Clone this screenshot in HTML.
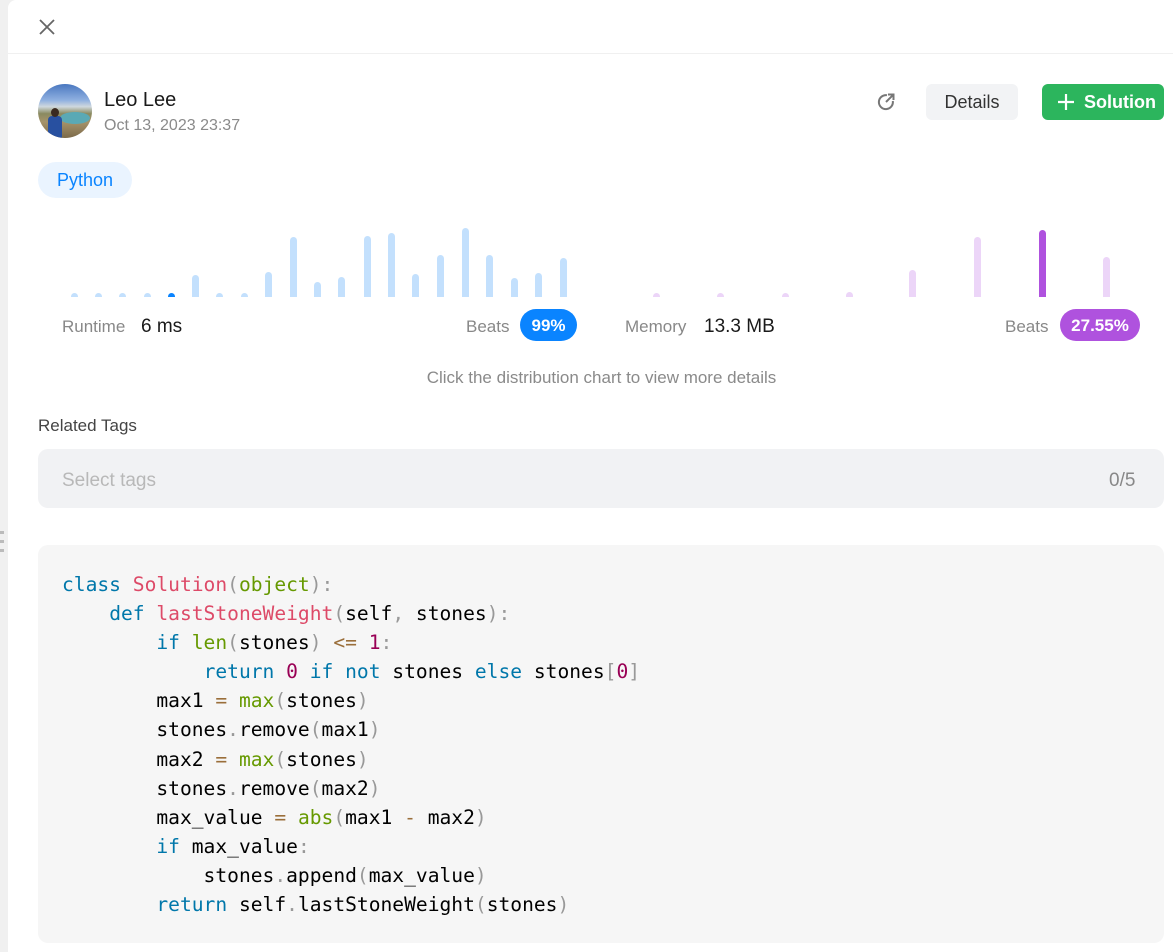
<!DOCTYPE html>
<html><head><meta charset="utf-8"><style>
*{margin:0;padding:0;box-sizing:border-box}
body{width:1173px;height:952px;overflow:hidden;background:#f0f0f0;font-family:"Liberation Sans",sans-serif;position:relative}
.panel{position:absolute;left:8px;top:0;width:1165px;height:952px;background:#fff;border-radius:8px 0 0 0}
.a{position:absolute}
.bar{position:absolute;width:7px;border-radius:4px 4px 0 0;bottom:655px}
.b{background:#c3e0fd}.p{background:#ecd5f8}
pre{position:absolute;left:38px;top:545px;width:1126px;height:398px;background:#f6f6f6;border-radius:10px;padding:25px 0 0 24px;font-family:"DejaVu Sans Mono","Liberation Mono",monospace;font-size:19.6px;line-height:29.1px;color:#000}
.k{color:#07a}.f{color:#dd4a68}.g{color:#690}.n{color:#905}.u{color:#999}.o{color:#9a6e3a}
.dot{position:absolute;left:0;width:4px;height:3px;background:#bbb}
</style></head><body>
<div class="dot" style="top:531px"></div><div class="dot" style="top:540px"></div><div class="dot" style="top:549px"></div>
<div class="panel"></div>
<svg class="a" style="left:38px;top:18px" width="18" height="18" viewBox="0 0 18 18"><path d="M2 2L16 16M16 2L2 16" stroke="#666" stroke-width="1.8"/></svg>
<div class="a" style="left:8px;top:53px;width:1165px;height:1px;background:#f0f0f0"></div>
<div class="a" style="left:38px;top:84px;width:54px;height:54px;border-radius:50%;overflow:hidden;background:linear-gradient(180deg,#4a78c0 0%,#8fb0e0 30%,#cfd8de 42%,#8a8a60 55%,#a6936a 70%,#7c6a4a 100%)">
<div class="a" style="left:22px;top:28px;width:30px;height:12px;border-radius:50%;background:#5aa9b5"></div>
<div class="a" style="left:10px;top:32px;width:14px;height:24px;border-radius:4px;background:#2850a0"></div>
<div class="a" style="left:13px;top:24px;width:8px;height:9px;border-radius:50%;background:#3a2a20"></div></div>
<div class="a" style="left:104px;top:89px;font-size:20px;color:#1a1a1a">Leo Lee</div>
<div class="a" style="left:104px;top:117px;font-size:16px;color:#8a8a8a">Oct 13, 2023 23:37</div>
<svg class="a" style="left:875px;top:91px" width="22" height="22" viewBox="0 0 22 22"><path d="M12 4.2A7 7 0 1 0 17.8 10" fill="none" stroke="#777" stroke-width="2"/><path d="M11 11L18 4M13 3.5H18.5V9" fill="none" stroke="#777" stroke-width="2"/></svg>
<div class="a" style="left:926px;top:84px;width:92px;height:36px;border-radius:6px;background:#f2f3f5;color:#333;font-size:18px;text-align:center;line-height:37px">Details</div>
<div class="a" style="left:1042px;top:84px;width:122px;height:36px;border-radius:6px;background:#2cb55d;color:#fff;font-size:18px;font-weight:bold;line-height:37px;padding-left:42px">Solution
<svg class="a" style="left:15px;top:9px" width="18" height="18"><path d="M9 1V17M1 9H17" stroke="#fff" stroke-width="2.2"/></svg></div>
<div class="a" style="left:38px;top:162px;width:94px;height:36px;border-radius:18px;background:#eaf4ff;color:#0a84ff;font-size:18px;text-align:center;line-height:37px">Python</div>
<div class="bar b" style="left:71px;height:4px"></div><div class="bar b" style="left:95px;height:4px"></div><div class="bar b" style="left:119px;height:4px"></div><div class="bar b" style="left:144px;height:4px"></div><div class="bar" style="left:168px;height:4px;background:#0a84ff"></div><div class="bar b" style="left:192px;height:22px"></div><div class="bar b" style="left:216px;height:4px"></div><div class="bar b" style="left:241px;height:4px"></div><div class="bar b" style="left:265px;height:25px"></div><div class="bar b" style="left:290px;height:60px"></div><div class="bar b" style="left:314px;height:15px"></div><div class="bar b" style="left:338px;height:20px"></div><div class="bar b" style="left:364px;height:61px"></div><div class="bar b" style="left:388px;height:64px"></div><div class="bar b" style="left:412px;height:23px"></div><div class="bar b" style="left:437px;height:42px"></div><div class="bar b" style="left:462px;height:69px"></div><div class="bar b" style="left:486px;height:42px"></div><div class="bar b" style="left:511px;height:19px"></div><div class="bar b" style="left:535px;height:24px"></div><div class="bar b" style="left:560px;height:39px"></div>
<div class="bar p" style="left:653px;height:4px"></div><div class="bar p" style="left:717px;height:4px"></div><div class="bar p" style="left:782px;height:4px"></div><div class="bar p" style="left:846px;height:5px"></div><div class="bar p" style="left:909px;height:27px"></div><div class="bar p" style="left:974px;height:60px"></div><div class="bar" style="left:1039px;height:67px;background:#af52de"></div><div class="bar p" style="left:1103px;height:40px"></div>
<div class="a" style="left:62px;top:317px;font-size:17px;color:#888">Runtime</div>
<div class="a" style="left:141px;top:316px;font-size:19px;color:#1a1a1a">6 ms</div>
<div class="a" style="left:466px;top:317px;font-size:17px;color:#888">Beats</div>
<div class="a" style="left:520px;top:309px;width:57px;height:32px;border-radius:16px;background:#0a84ff;color:#fff;font-size:17px;font-weight:bold;text-align:center;line-height:33px">99%</div>
<div class="a" style="left:625px;top:317px;font-size:17px;color:#888">Memory</div>
<div class="a" style="left:704px;top:316px;font-size:19px;color:#1a1a1a">13.3 MB</div>
<div class="a" style="left:1005px;top:317px;font-size:17px;color:#888">Beats</div>
<div class="a" style="left:1060px;top:309px;width:80px;height:32px;border-radius:16px;background:#af52de;color:#fff;font-size:17px;font-weight:bold;text-align:center;line-height:33px">27.55%</div>
<div class="a" style="left:0;width:1173px;top:368px;text-align:center;font-size:17px;color:#8a8a8a;padding-left:30px">Click the distribution chart to view more details</div>
<div class="a" style="left:38px;top:416px;font-size:17px;color:#444">Related Tags</div>
<div class="a" style="left:38px;top:449px;width:1126px;height:59px;border-radius:10px;background:#f1f2f4"></div>
<div class="a" style="left:62px;top:470px;font-size:19px;color:#b8b8b8">Select tags</div>
<div class="a" style="left:1109px;top:470px;font-size:19px;color:#888">0/5</div>
<pre><span class="k">class</span> <span class="f">Solution</span><span class="u">(</span><span class="g">object</span><span class="u">):</span>
    <span class="k">def</span> <span class="f">lastStoneWeight</span><span class="u">(</span>self<span class="u">,</span> stones<span class="u">):</span>
        <span class="k">if</span> <span class="g">len</span><span class="u">(</span>stones<span class="u">)</span> <span class="o">&lt;=</span> <span class="n">1</span><span class="u">:</span>
            <span class="k">return</span> <span class="n">0</span> <span class="k">if</span> <span class="k">not</span> stones <span class="k">else</span> stones<span class="u">[</span><span class="n">0</span><span class="u">]</span>
        max1 <span class="o">=</span> <span class="g">max</span><span class="u">(</span>stones<span class="u">)</span>
        stones<span class="u">.</span>remove<span class="u">(</span>max1<span class="u">)</span>
        max2 <span class="o">=</span> <span class="g">max</span><span class="u">(</span>stones<span class="u">)</span>
        stones<span class="u">.</span>remove<span class="u">(</span>max2<span class="u">)</span>
        max_value <span class="o">=</span> <span class="g">abs</span><span class="u">(</span>max1 <span class="o">-</span> max2<span class="u">)</span>
        <span class="k">if</span> max_value<span class="u">:</span>
            stones<span class="u">.</span>append<span class="u">(</span>max_value<span class="u">)</span>
        <span class="k">return</span> self<span class="u">.</span>lastStoneWeight<span class="u">(</span>stones<span class="u">)</span></pre>
</body></html>
